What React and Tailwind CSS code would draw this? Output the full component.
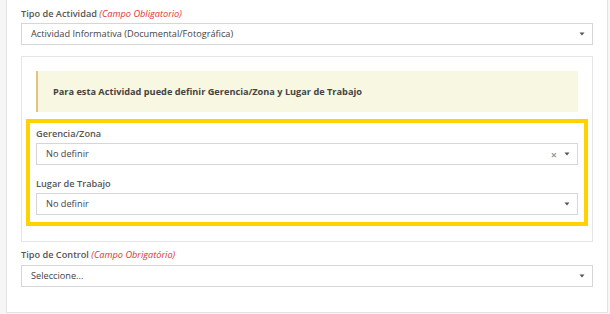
function Arrow() {
  return (
    <svg width="6" height="4" viewBox="0 0 6 4" className="shrink-0">
      <path d="M0.5 0.5h5L3 3.5z" fill="#555" />
    </svg>
  );
}

function Select({ value, clear }) {
  return (
    <div className="flex h-[22px] items-center border border-[#d6d6d6] bg-white pl-[9px] pr-[7px] text-[#444]">
      <span className="flex-1 truncate">{value}</span>
      {clear && <span className="mr-[7px] text-[11px] font-bold leading-none text-[#999]">×</span>}
      <Arrow />
    </div>
  );
}

function Label({ children, required }) {
  return (
    <div className="h-[12px] leading-[12px] font-semibold text-[#555]">
      {children}
      {required && (
        <span className="font-normal italic text-[#e0312f]"> ({required})</span>
      )}
    </div>
  );
}

export default function App() {
  return (
    <div
      className="h-[314px] w-[610px] overflow-hidden bg-[#f6f6f6] text-[9.2px]"
      style={{ fontFamily: '"Open Sans", "Liberation Sans", sans-serif' }}
    >
      <div className="ml-[6px] h-[313px] w-[602px] border border-t-0 border-[#e3e3e3] bg-white px-[14px] pt-[8px]">
        <Label required="Campo Obligatorio">Tipo de Actividad</Label>
        <div className="mt-[3px]">
          <Select value="Actividad Informativa (Documental/Fotográfica)" />
        </div>

        <div className="mt-[11px] h-[186px] border border-[#e5e5e5] px-[14px] pt-[14px]">
          <div className="flex h-[41px] items-center border-l-2 border-[#e2c57c] bg-[#f8f7e1] pl-[15px] font-bold text-[#444]">
            Para esta Actividad puede definir Gerencia/Zona y Lugar de Trabajo
          </div>

          <div className="mx-[-10px] mt-[7px] h-[107px] border-4 border-[#ffd200] px-[6px] pt-[5px]">
            <Label>Gerencia/Zona</Label>
            <div className="mt-[3px]">
              <Select value="No definir" clear />
            </div>
            <div className="mt-[13px]">
              <Label>Lugar de Trabajo</Label>
            </div>
            <div className="mt-[3px]">
              <Select value="No definir" />
            </div>
          </div>
        </div>

        <div className="mt-[7px]">
          <Label required="Campo Obrigatório">Tipo de Control</Label>
        </div>
        <div className="mt-[4px]">
          <Select value="Seleccione..." />
        </div>
      </div>
    </div>
  );
}
